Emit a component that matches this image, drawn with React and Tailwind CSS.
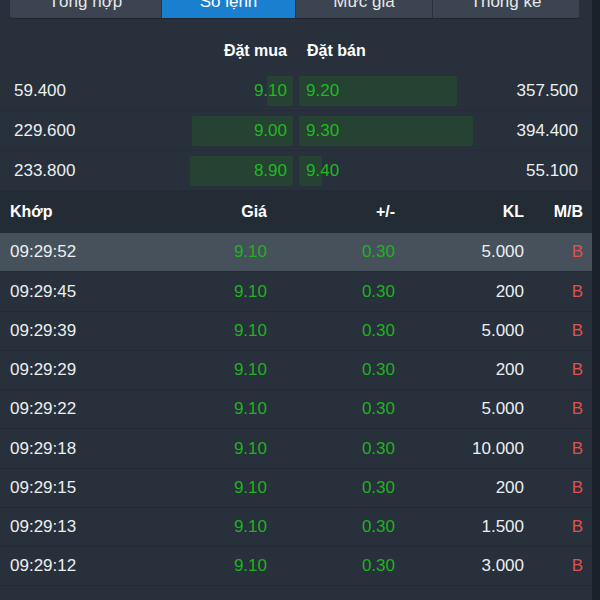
import React from "react";

const TABS = [
  { label: "Tổng hợp", w: "w-[152px]" },
  { label: "Sổ lệnh", w: "w-[134px]", active: true },
  { label: "Mức giá", w: "w-[137px]" },
  { label: "Thống kê", w: "w-[147px]" },
];

const BOOK = [
  { bidVol: "59.400", bid: "9.10", bidW: 26, ask: "9.20", askW: 158, askVol: "357.500" },
  { bidVol: "229.600", bid: "9.00", bidW: 101, ask: "9.30", askW: 174, askVol: "394.400" },
  { bidVol: "233.800", bid: "8.90", bidW: 103, ask: "9.40", askW: 23, askVol: "55.100" },
];

const TRADES = [
  ["09:29:52", "5.000"],
  ["09:29:45", "200"],
  ["09:29:39", "5.000"],
  ["09:29:29", "200"],
  ["09:29:22", "5.000"],
  ["09:29:18", "10.000"],
  ["09:29:15", "200"],
  ["09:29:13", "1.500"],
  ["09:29:12", "3.000"],
];

export default function App() {
  return (
    <div className="w-[600px] h-[600px] overflow-hidden flex items-start bg-[#1b212b] text-[#eceef0] font-['Liberation_Sans',Arial,sans-serif]">
      <div className="w-[592px] h-[600px] shrink-0 bg-[#27303b]">
        {/* Tabs */}
        <div className="pl-[10px] pr-[12px] -mt-[15px]">
          <div className="flex h-[34px] rounded-b-[4px] overflow-hidden border-b border-[#1f2630] bg-[#2f3843]">
            {TABS.map((t) => (
              <div
                key={t.label}
                className={`${t.w} flex items-center justify-center text-[17px] border-r border-[#2a323d] ${t.active ? "bg-[#1a7fce] text-white" : "bg-[#3b4450] text-[#e6e8ea]"}`}
              >
                {t.label}
              </div>
            ))}
          </div>
        </div>

        {/* Order book header */}
        <div className="flex h-[32px] mt-[16px] mb-[4px] items-center pl-[14px] text-[16px] font-bold text-white">
          <div className="w-[136px]" />
          <div className="w-[143px] text-right pr-[6px]">Đặt mua</div>
          <div className="w-[6px]" />
          <div className="w-[181px] pl-[8px]">Đặt bán</div>
        </div>

        {/* Order book rows */}
        {BOOK.map((r) => (
          <div key={r.bidVol} className="flex h-[40px] items-center pl-[14px] text-[17px] border-b border-[#242c37]">
            <div className="w-[136px]">{r.bidVol}</div>
            <div className="w-[143px] grid">
              <div className="col-start-1 row-start-1 justify-self-end h-[30px] rounded-[2px] bg-[#254233]" style={{ width: r.bidW }} />
              <div className="col-start-1 row-start-1 justify-self-end self-center pr-[6px] text-[#1fb91f]">{r.bid}</div>
            </div>
            <div className="w-[6px]" />
            <div className="w-[181px] grid">
              <div className="col-start-1 row-start-1 justify-self-start h-[30px] rounded-[2px] bg-[#254233]" style={{ width: r.askW }} />
              <div className="col-start-1 row-start-1 justify-self-start self-center pl-[7px] text-[#1fb91f]">{r.ask}</div>
            </div>
            <div className="flex-1 text-right pr-[14px]">{r.askVol}</div>
          </div>
        ))}

        {/* Trades header */}
        <div className="flex h-[42px] items-center pl-[10px] text-[16px] font-bold text-white bg-[#232b35]">
          <div className="w-[150px]">Khớp</div>
          <div className="w-[107px] text-right">Giá</div>
          <div className="w-[128px] text-right">+/-</div>
          <div className="w-[129px] text-right">KL</div>
          <div className="w-[59px] text-right">M/B</div>
        </div>

        {/* Trades */}
        {TRADES.map(([time, vol], i) => (
          <div
            key={time}
            className={`flex h-[39.25px] items-center pl-[10px] text-[17px] border-b border-[#222a34] ${i === 0 ? "bg-[#46515c]" : ""}`}
          >
            <div className="w-[150px]">{time}</div>
            <div className="w-[107px] text-right text-[#1fb21f]">9.10</div>
            <div className="w-[128px] text-right text-[#1fb21f]">0.30</div>
            <div className="w-[129px] text-right">{vol}</div>
            <div className="w-[59px] text-right text-[#e0504e]">B</div>
          </div>
        ))}
        <div className="h-[40px] pl-[10px] pt-[10px] text-[17px]">Sổ lệnh</div>
      </div>

      {/* Right strip with scrollbar and clipped neighbour text */}
      <div className="flex-1 flex flex-col overflow-hidden">
        <div className="h-[232px]" />
        <div className="-ml-[5px] w-[5px] h-[36px] rounded-full bg-[#6b747e]" />
      </div>
    </div>
  );
}
